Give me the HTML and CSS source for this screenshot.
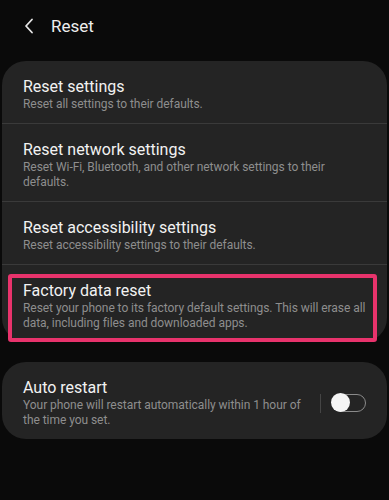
FILE: index.html
```html
<!DOCTYPE html>
<html lang="en">
<head>
    <meta charset="UTF-8">
    <title>Reset</title>
    <meta name="viewport" content="width=device-width, initial-scale=1.0">
    <link rel="stylesheet" href="styles.css">
</head>
<body>

<header class="top-bar">
    <svg class="back-icon" width="10" height="16" viewBox="0 0 10 16">
        <path d="M8 1.5 L2 8 L8 14.5" fill="none" stroke="#e6e6e6" stroke-width="1.8" stroke-linecap="round" stroke-linejoin="round"/>
    </svg>
    <h1>Reset</h1>
</header>

<div class="card">
    <div class="item">
        <div class="item-title">Reset settings</div>
        <div class="item-sub">Reset all settings to their defaults.</div>
    </div>
    <div class="item">
        <div class="item-title">Reset network settings</div>
        <div class="item-sub">Reset Wi-Fi, Bluetooth, and other network settings to their defaults.</div>
    </div>
    <div class="item">
        <div class="item-title">Reset accessibility settings</div>
        <div class="item-sub">Reset accessibility settings to their defaults.</div>
    </div>
    <div class="item highlighted">
        <div class="item-title">Factory data reset</div>
        <div class="item-sub">Reset your phone to its factory default settings. This will erase all data, including files and downloaded apps.</div>
    </div>
</div>

<div class="card">
    <div class="item with-switch">
        <div class="item-text">
            <div class="item-title">Auto restart</div>
            <div class="item-sub">Your phone will restart automatically within 1 hour of the time you set.</div>
        </div>
        <div class="switch-sep"></div>
        <div class="switch"><span class="knob"></span></div>
    </div>
</div>

</body>
</html>
```

FILE: styles.css
```css
body {
    background-color: #0a0a0a;
    color: #f0f0f0;
    font-family: Roboto, "Noto Sans", sans-serif;
    margin: 0;
}

.top-bar {
    display: flex;
    align-items: center;
    height: 52px;
    padding-left: 24px;
}

.back-icon {
    margin-right: 17px;
}

.top-bar h1 {
    font-size: 17px;
    font-weight: 400;
    margin: 0;
    color: #eeeeee;
}

.card {
    background-color: #242424;
    border-radius: 24px;
    margin: 9px 2px 0;
}

.card + .card {
    margin-top: 20px;
}

.item {
    position: relative;
    padding: 16px 16px 11px 20px;
    border-bottom: 1px solid #3a3a3a;
}

.item:last-child {
    border-bottom: none;
}

.item-title {
    font-size: 16px;
    line-height: 20px;
    color: #f2f2f2;
    padding-left: 1px;
}

.item-sub {
    font-size: 12px;
    line-height: 15px;
    color: #8e8e8e;
    padding-left: 1px;
    letter-spacing: -0.05px;
}

.highlighted::after {
    content: "";
    position: absolute;
    left: 6px;
    right: 10px;
    top: 9px;
    bottom: 0;
    border: 4px solid #e8336c;
    border-radius: 3px;
}

.with-switch {
    display: flex;
    align-items: center;
    padding-right: 21px;
}

.item-text {
    flex: 1;
}

.switch-sep {
    width: 1px;
    height: 19px;
    background-color: #454545;
    margin: 0 11px 0 14px;
}

.switch {
    position: relative;
    width: 32px;
    height: 16px;
    border: 1.5px solid #8a8a8a;
    border-radius: 10px;
}

.knob {
    position: absolute;
    left: -2px;
    top: -2.5px;
    width: 19px;
    height: 19px;
    border-radius: 50%;
    background-color: #f5f5f5;
}
```
